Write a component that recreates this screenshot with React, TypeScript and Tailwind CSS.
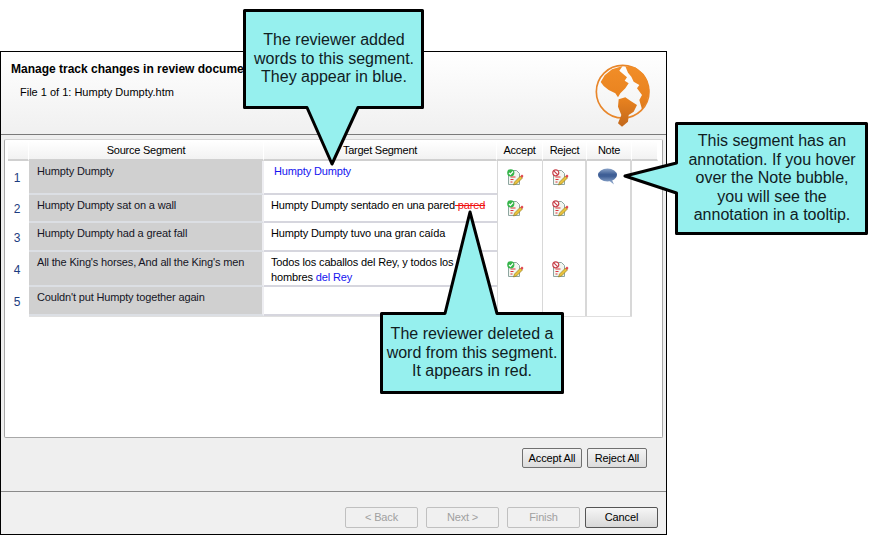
const rows = [
  { n: 1, h: "h-[34px]", icon: "pt-[8px]", source: "Humpty Dumpty", actions: true, note: true },
  { n: 2, h: "h-[28px]", icon: "pt-[5px]", source: "Humpty Dumpty sat on a wall", actions: true, note: false },
  { n: 3, h: "h-[29px]", icon: "pt-[5px]", source: "Humpty Dumpty had a great fall", actions: false, note: false },
  { n: 4, h: "h-[35px]", icon: "pt-[9px]", source: "All the King's horses, And all the King's men", actions: true, note: false },
  { n: 5, h: "h-[29px]", icon: "pt-[5px]", source: "Couldn't put Humpty together again", actions: false, note: false },
];

function target(n: number) {
  if (n === 1) return <span className="pl-[3px] text-[#1414f0]">Humpty Dumpty</span>;
  if (n === 2)
    return (
      <span className="whitespace-pre">
        <span>Humpty Dumpty sentado en una pared</span>
        <span className="text-[#f01010] line-through"> pared</span>
      </span>
    );
  if (n === 3) return <span>Humpty Dumpty tuvo una gran caída</span>;
  if (n === 4)
    return (
      <div className="leading-[15px]">
        <div>Todos los caballos del Rey, y todos los</div>
        <div className="flex gap-[3px]">
          <span>hombres</span>
          <span className="text-[#1414f0]">del Rey</span>
        </div>
      </div>
    );
  return null;
}

function DocIcon({ accept }: { accept: boolean }) {
  return (
    <svg width="17" height="17" viewBox="0 0 17 17" className="block">
      <path d="M1.500 1.500h8l3 3v11h-11z" fill="#f2f6f0" stroke="#8ea5a0" />
      <path d="M3.500 8h5M3.500 10.500h3M3.500 13h2" stroke="#e0303a" strokeWidth="1" />
      <path d="M6.500 16l1-3 6-6 2 2-6 6z" fill="#e8c23c" stroke="#8a7420" strokeWidth="0.6" />
      <path d="M13.500 7l1.500-1.500 1.500 1.500-1.500 2z" fill="#e0404a" />
      {accept ? (
        <>
          <circle cx="3.800" cy="3.800" r="3.600" fill="#35b54a" />
          <path d="M2 3.800l1.400 1.500 2.600-2.800" fill="none" stroke="#ffffff" strokeWidth="1.200" />
        </>
      ) : (
        <>
          <circle cx="3.800" cy="3.800" r="3" fill="#ffffff" stroke="#c8404a" strokeWidth="1.200" />
          <path d="M1.800 1.800l4 4" stroke="#c8404a" strokeWidth="1.200" />
        </>
      )}
    </svg>
  );
}

function NoteIcon() {
  return (
    <svg width="20" height="17" viewBox="0 0 20 17" className="block">
      <defs>
        <linearGradient id="note" x1="0" y1="0" x2="0" y2="1">
          <stop offset="0" stopColor="#8aa3c8" />
          <stop offset="0.45" stopColor="#3f5f96" />
          <stop offset="0.6" stopColor="#3f5f96" />
          <stop offset="1" stopColor="#7f9ac2" />
        </linearGradient>
      </defs>
      <path d="M14 12l2 4.500-5-4z" fill="#7f9ac2" />
      <ellipse cx="9.500" cy="7" rx="9.500" ry="6.500" fill="url(#note)" />
    </svg>
  );
}

function Globe() {
  return (
    <svg width="62" height="68" viewBox="0 0 186 204" className="block shrink-0">
      <defs>
        <linearGradient id="globe" gradientUnits="userSpaceOnUse" x1="0" y1="15" x2="0" y2="200">
          <stop offset="0" stopColor="#f28e28" />
          <stop offset="0.55" stopColor="#e8821f" />
          <stop offset="1" stopColor="#c2681c" />
        </linearGradient>
      </defs>
      <circle cx="92" cy="95" r="79" fill="none" stroke="#e8862a" strokeWidth="5" />
      <g fill="url(#globe)">
        <path d="M26 66L38 46L60 28L92 18L82 32L105 52L98 62L110 70L100 85L85 100L78 112L70 100L50 90L35 78Z" />
        <path d="M100 19L130 22L155 42L165 60L172 90L165 125L150 148L142 120L150 105L135 85L142 75L125 65L118 50L108 38Z" />
        <path d="M80 118L100 112L115 122L135 135L125 155L110 165L108 185L90 200L78 190L88 165L78 140Z" />
      </g>
    </svg>
  );
}

function WizardButton({ label, disabled }: { label: string; disabled?: boolean }) {
  return (
    <div
      className={
        "flex h-[21px] w-[73px] items-center justify-center rounded-[2px] border text-[11px] tracking-[-0.15px] " +
        (disabled
          ? "border-[#c0c0c0] bg-[#f0f0f0] text-[#a0a0a0]"
          : "border-[#555555] bg-gradient-to-b from-[#f6f6f6] to-[#d8d8d8] text-black")
      }
    >
      {label}
    </div>
  );
}

function SmallButton({ label }: { label: string }) {
  return (
    <div className="flex h-[20px] w-[60px] items-center justify-center rounded-[2px] border border-[#707070] bg-gradient-to-b from-[#f4f4f4] to-[#dcdcdc] text-[11px] tracking-[-0.15px] text-black">
      {label}
    </div>
  );
}

function Callout({ box, path, children }: { box: string; path: string; children: React.ReactNode }) {
  return (
    <div className={"absolute " + box}>
      <svg className="absolute inset-0 h-full w-full">
        <path d={path} fill="#96f0ee" stroke="#000000" strokeWidth="3" strokeLinejoin="round" />
      </svg>
      {children}
    </div>
  );
}

export default function App() {
  return (
    <div className="relative h-[535px] w-[877px] overflow-hidden bg-white font-['Liberation_Sans',Arial,sans-serif] text-black">
      <div className="mt-[51px] flex h-[484px] w-[667px] flex-col border border-black bg-[#efefef]">
        <div className="flex h-[83px] shrink-0 justify-between border-b border-[#7a7a7a] bg-gradient-to-b from-white to-[#f0f0f0] pl-[10px] pr-[12px]">
          <div className="pt-[10px]">
            <div className="text-[12px] font-bold leading-[15px]">Manage track changes in review documents</div>
            <div className="mt-[8px] pl-[9px] text-[11px] leading-[15px]">File 1 of 1: Humpty Dumpty.htm</div>
          </div>
          <div className="pt-[8px]">
            <Globe />
          </div>
        </div>

        <div className="mx-[3px] mt-[4px] h-[299px] shrink-0 rounded-[2px] border border-[#a8a8a8] border-t-[#d4d4d4] bg-white px-[3px] pt-[1px]">
          <div className="grid grid-cols-[21px_235px_233px_46px_44px_45px_26px] text-[11px] leading-[14px] tracking-[-0.25px]">
            {["", "Source Segment", "Target Segment", "Accept", "Reject", "Note", ""].map((label, i) => (
              <div
                key={i}
                className="flex h-[20px] items-center justify-center border-b-2 border-r border-b-[#d0d0d0] border-r-white bg-gradient-to-b from-white to-[#f2f2f2]"
              >
                {label}
              </div>
            ))}
          </div>
          {rows.map((r) => (
            <div
              key={r.n}
              className={"grid grid-cols-[21px_235px_233px_46px_44px_45px] text-[11px] leading-[14px] tracking-[-0.15px] " + r.h}
            >
              <div className="flex items-center justify-center pr-[3px] text-[12px] text-[#1c3c80]">{r.n}</div>
              <div className="border-b-2 border-r-2 border-b-[#dcdfe4] border-r-[#eeeef2] bg-[#d0d0d0] pl-[8px] pt-[3px] text-[#151525]">
                {r.source}
              </div>
              <div className="border-b-2 border-b-[#d6d6de] pl-[7px] pt-[3px]">{target(r.n)}</div>
              <div className={"border-x border-[#d8d8d8] pl-[9px] " + r.icon}>{r.actions && <DocIcon accept />}</div>
              <div className={"border-r-2 border-[#d8d8d8] pl-[9px] " + r.icon}>{r.actions && <DocIcon accept={false} />}</div>
              <div className="border-r-2 border-[#d8d8d8] pl-[11px] pt-[7px]">{r.note && <NoteIcon />}</div>
            </div>
          ))}
          <div className="ml-[21px] h-[1px] w-[603px] bg-[#e0e0e0]" />
        </div>

        <div className="flex flex-1 items-start justify-end gap-[5px] pr-[19px] pt-[10px]">
          <SmallButton label="Accept All" />
          <SmallButton label="Reject All" />
        </div>

        <div className="flex h-[43px] shrink-0 items-start justify-end border-t border-[#8a8a8a] bg-[#f0f0f0] pr-[8px] pt-[15px]">
          <WizardButton label="< Back" disabled />
          <div className="w-[8px]" />
          <WizardButton label="Next >" disabled />
          <div className="w-[8px]" />
          <WizardButton label="Finish" disabled />
          <div className="w-[5px]" />
          <WizardButton label="Cancel" />
        </div>
      </div>

      <Callout box="left-[240px] top-[6px] h-[164px] w-[190px]" path="M4.500 4.500H182.500V101.500H118L92 158L67 101.500H4.500Z">
        <div className="absolute left-[5px] top-[25px] w-[178px] text-center text-[16px] leading-[18.500px] text-[#10201f]">
          The reviewer added
          <br />
          words to this segment.
          <br />
          They appear in blue.
        </div>
      </Callout>

      <Callout box="left-[620px] top-[118px] h-[122px] w-[252px]" path="M56.500 5.500H246.500V115.500H56.500V75L5 58L56.500 45Z">
        <div className="absolute left-[57px] top-[14px] w-[190px] text-center text-[16px] leading-[18.500px] text-[#10201f]">
          This segment has an
          <br />
          annotation. If you hover
          <br />
          over the Note bubble,
          <br />
          you will see the
          <br />
          annotation in a tooltip.
        </div>
      </Callout>

      <Callout box="left-[376px] top-[208px] h-[190px] w-[192px]" path="M5.500 105.500H69L94 4L121 105.500H186.500V184.500H5.500Z">
        <div className="absolute left-[5px] top-[117px] w-[182px] text-center text-[16px] leading-[18.500px] text-[#10201f]">
          The reviewer deleted a
          <br />
          word from this segment.
          <br />
          It appears in red.
        </div>
      </Callout>
    </div>
  );
}
